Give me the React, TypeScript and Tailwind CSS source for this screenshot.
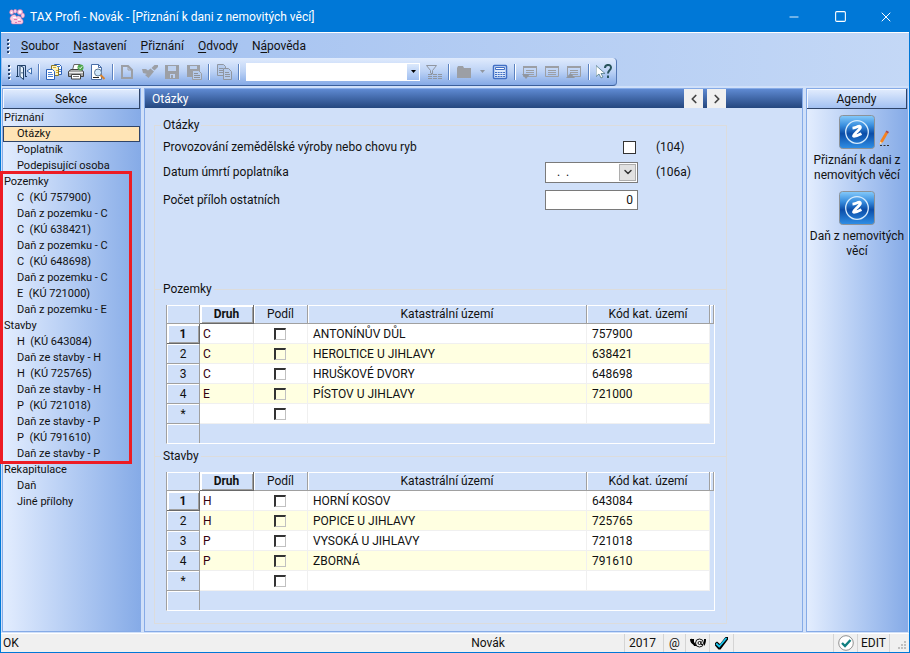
import clsx from "clsx";
import { ChevronDown, ChevronLeft, ChevronRight, Minus, Square, X } from "lucide-react";
import type { JSX, ReactNode } from "react";

type MenuItem = { before: string; hot: string; after: string };

type SectionItem = { title: string; root?: boolean; active?: boolean };

type LandRow = { kind: string; area: string; code: string };

type IconButtonProps = { label: string; children: ReactNode; narrow?: boolean };

const menu: MenuItem[] = [
  { before: "", hot: "S", after: "oubor" },
  { before: "", hot: "N", after: "astavení" },
  { before: "", hot: "P", after: "řiznání" },
  { before: "", hot: "O", after: "dvody" },
  { before: "N", hot: "á", after: "pověda" },
];

const topSections: SectionItem[] = [
  { title: "Přiznání", root: true },
  { title: "Otázky", active: true },
  { title: "Poplatník" },
  { title: "Podepisující osoba" },
];

const propertySections: SectionItem[] = [
  { title: "Pozemky", root: true },
  { title: "C  (KÚ 757900)" },
  { title: "Daň z pozemku - C" },
  { title: "C  (KÚ 638421)" },
  { title: "Daň z pozemku - C" },
  { title: "C  (KÚ 648698)" },
  { title: "Daň z pozemku - C" },
  { title: "E  (KÚ 721000)" },
  { title: "Daň z pozemku - E" },
  { title: "Stavby", root: true },
  { title: "H  (KÚ 643084)" },
  { title: "Daň ze stavby - H" },
  { title: "H  (KÚ 725765)" },
  { title: "Daň ze stavby - H" },
  { title: "P  (KÚ 721018)" },
  { title: "Daň ze stavby - P" },
  { title: "P  (KÚ 791610)" },
  { title: "Daň ze stavby - P" },
];

const bottomSections: SectionItem[] = [
  { title: "Rekapitulace", root: true },
  { title: "Daň" },
  { title: "Jiné přílohy" },
];

const lands: LandRow[] = [
  { kind: "C", area: "ANTONÍNŮV DŮL", code: "757900" },
  { kind: "C", area: "HEROLTICE U JIHLAVY", code: "638421" },
  { kind: "C", area: "HRUŠKOVÉ DVORY", code: "648698" },
  { kind: "E", area: "PÍSTOV U JIHLAVY", code: "721000" },
];

const buildings: LandRow[] = [
  { kind: "H", area: "HORNÍ KOSOV", code: "643084" },
  { kind: "H", area: "POPICE U JIHLAVY", code: "725765" },
  { kind: "P", area: "VYSOKÁ U JIHLAVY", code: "721018" },
  { kind: "P", area: "ZBORNÁ", code: "791610" },
];

/* ICONS */

const PawIcon = () => (
  <svg viewBox="0 0 16 16" className="size-4 shrink-0">
    <g fill="#f9cfe2" stroke="#dd6aa8" strokeWidth="0.5">
      <ellipse cx="2.6" cy="3.2" rx="2" ry="2.4" />
      <ellipse cx="6.2" cy="2.2" rx="1.600" ry="2" />
      <ellipse cx="11" cy="3" rx="2.8" ry="2.6" />
      <ellipse cx="13.800" cy="6.500" rx="1.800" ry="2.400" />
      <path d="M1.500 8c2-3 5-3 6-.5 2-1.500 5 0 5 2.500 2 .5 2.500 5-.5 5H4c-2 0-2-2-1.500-3C1 11 .5 9.500 1.500 8z" />
    </g>
    <path d="M5 10h3v1H5zM9 12h3v1H9zM6 13h2v1H6z" fill="#e27ab0" />
    <path d="M4 8h3v1H4zM10 2h2v2h-2zM9 10h2v1H9zM2 3h1v1H2z" fill="#fff" />
  </svg>
);

const DoorIcon = () => (
  <svg viewBox="0 0 16 16" className="size-4" fill="none" stroke="#1f3f66">
    <path d="M0 12.500h3M1.500 12V1.500h8V12M9 12.500h2" />
    <path d="M4 1.500l3.500 2v12L4 12.500z" fill="#e6f2fb" />
    <path d="M6 8v1.500" />
    <path d="M15.500 4v6L11 7z" fill="#fff" stroke="#3f6fae" />
  </svg>
);

const CopyDocsIcon = () => (
  <svg viewBox="0 0 16 16" className="size-4">
    <path d="M8.500.5h5l2 2v8h-7z" fill="#fff" stroke="#2d62b8" />
    <path d="M5.500 1.500h5l2 2v8h-7z" fill="#fbf3c0" stroke="#8a7622" />
    <path d="M7 3.500h3M10 6.500h2M10 8.500h2" stroke="#d9b030" />
    <path d="M.5 5.500h6l2 2v8h-8z" fill="#fff" stroke="#2d62b8" />
    <path d="M2 8.500h4M2 10.500h5M2 12.500h5M11 2.500h3M13 5.500h2M13 7.500h2" stroke="#4c82d4" />
  </svg>
);

const PrintIcon = () => (
  <svg viewBox="0 0 16 16" className="size-4">
    <path d="M4.500 6L6 .5h6L10.500 6z" fill="#fff" stroke="#666" />
    <path d="M.5 7.500L3 5.500h10l2.500 2v5H.5z" fill="#a9a9a9" stroke="#444" />
    <path d="M1 8.500h14" stroke="#f0f0f0" />
    <path d="M3.500 10.500h9v4.500h-9z" fill="#fff" stroke="#444" />
    <path d="M5 12.500h6" stroke="#777" />
    <circle cx="12.500" cy="3.500" r="3" fill="#4aa548" />
    <path d="M11 3.500l1.200 1.200 2-2.400" fill="none" stroke="#fff" />
  </svg>
);

const PreviewIcon = () => (
  <svg viewBox="0 0 16 16" className="size-4">
    <path d="M1.500.5h7l3 3v12h-10z" fill="#fff" stroke="#4a6fa8" />
    <path d="M8.500.5v3h3" fill="none" stroke="#4a6fa8" />
    <path d="M3 13.500h6" stroke="#222" />
    <circle cx="8" cy="8.500" r="3.500" fill="#cfe6fa" stroke="#5f7c99" />
    <path d="M10.500 11l4 4" stroke="#d9822b" strokeWidth="2" />
  </svg>
);

const BlankDocIcon = () => (
  <svg viewBox="0 0 16 16" className="size-4" fill="none" stroke="#9c9fa5" strokeWidth="2">
    <path d="M2 2h6l4 4v8H2z" />
    <path d="M8 2v4h4" strokeWidth="1" />
  </svg>
);

const BrushIcon = () => (
  <svg viewBox="0 0 16 16" className="size-4" fill="#9c9fa5">
    <path d="M12.500 1H16v2l-3.500 3.500L9.500 4z" />
    <path d="M8.500 4.500l3.500 3-5.500 6.500L3 11l2-1-4-1L0 5h4l2 1.500z" />
  </svg>
);

const SaveIcon = () => (
  <svg viewBox="0 0 16 16" className="size-4">
    <path d="M1 1h14v14H1z" fill="#9c9fa5" />
    <path d="M4 2h8v5H4zM6 10h5v4H6z" fill="#bdd1f0" />
    <path d="M7 11h2v3H7z" fill="#9c9fa5" />
  </svg>
);

const SaveDocIcon = () => (
  <svg viewBox="0 0 16 16" className="size-4">
    <path d="M1 1h13v12H1z" fill="#9c9fa5" />
    <path d="M4 2h7v3H4z" fill="#bdd1f0" />
    <path d="M6.500 6.500h6l3 3v6h-9z" fill="#b5cbed" stroke="#9c9fa5" />
    <path d="M8 9.500h4M8 11.500h6M8 13.500h6" stroke="#8c919a" />
  </svg>
);

const CopyIcon = () => (
  <svg viewBox="0 0 16 16" className="size-4" fill="#b5cbed" stroke="#9096a0">
    <path d="M1.500.5h6l2 2v9h-8z" />
    <path d="M3 4.500h4M3 6.500h4M3 8.500h4" />
    <path d="M7.500 4.500h5l3 3v8h-8z" />
    <path d="M9 8.500h4M9 10.500h5M9 12.500h5" />
  </svg>
);

const FilterIcon = () => (
  <svg viewBox="0 0 16 16" className="size-4" fill="none" stroke="#9096a0">
    <path d="M.5 1.500h10l-4 5V10l-2-1V6.500z" />
    <path d="M2 10.500h14M2 12.500h14M2 14.500h14" strokeDasharray="4 1" />
  </svg>
);

const FolderIcon = () => (
  <svg viewBox="0 0 16 16" className="size-4" fill="#9c9fa5">
    <path d="M1 4l1-2h5l1 2h7v10H1z" />
  </svg>
);

const CalculatorIcon = () => (
  <svg viewBox="0 0 16 16" className="size-4" fill="none" stroke="#416fc4">
    <rect x="1.500" y="1.500" width="13" height="13" rx="1" fill="#dce9fb" strokeWidth="1.500" />
    <path d="M3.500 3.500h9v2h-9z" fill="#fff" />
    <path d="M3 8.500h10M3 10.500h10M3 12.500h10" strokeDasharray="2 0.700" />
  </svg>
);

const NoteIcon = ({ kind }: { kind: "down" | "plain" | "up" }) => (
  <svg viewBox="0 0 16 16" className="size-4" fill="none" stroke="#9c9fa5">
    <path d="M1.500 2.500h13v10h-13z" />
    <path d="M1 3h14" strokeWidth="2" />
    <path d="M4 6.500h8M4 8.500h8M4 10.500h8" />
    {kind === "down" && <path d="M0 10h8l-4 5z" fill="#9096a0" stroke="none" />}
    {kind === "up" && <path d="M0 14h9l-4.500-5z" fill="#9096a0" stroke="none" />}
  </svg>
);

const HelpCursorIcon = () => (
  <svg viewBox="0 0 16 16" className="size-4">
    <path d="M9 4c0-4 6-4 6-.5 0 3-3 2.500-3 6M12 11.500V14" fill="none" stroke="#28535c" strokeWidth="2" />
    <path d="M0 1.500v11l3-2.500L5 14l2-1-2-3.500h4z" fill="#fff" stroke="#4f7a86" strokeWidth="0.800" />
  </svg>
);

const AgendaIcon = () => (
  <svg viewBox="0 0 36 34" className="h-[34px] w-9">
    <defs>
      <linearGradient id="agenda" x1="0" y1="0" x2="0" y2="1">
        <stop offset="0" stopColor="#86cbfb" />
        <stop offset="0.300" stopColor="#3a8fdf" />
        <stop offset="0.550" stopColor="#0b4da8" />
        <stop offset="1" stopColor="#2f8fe6" />
      </linearGradient>
    </defs>
    <rect x="0.500" y="0.500" width="35" height="33" rx="3" fill="url(#agenda)" stroke="#8d9298" />
    <circle cx="18" cy="17" r="11.300" fill="none" stroke="#d6ebfd" strokeWidth="1.300" />
    <path
      d="M13.500 13.200c2.500-.2 4.500-1.700 7.200-2 1.800.8-.2 3-2 4.800-1.500 1.600-3.700 3.400-4.200 5.200 2.500.3 5-1 8-2.500"
      fill="none"
      stroke="#fff"
      strokeWidth="2.800"
      strokeLinejoin="round"
    />
  </svg>
);

const PencilIcon = () => (
  <svg viewBox="0 0 12 17" className="absolute top-[15px] left-[39px] h-[17px] w-3">
    <path d="M1.500 14.500l1-4L7.500 2l2.500 1.300-5 8.700z" fill="#f58220" />
    <path d="M7.500 2l1-1.500L11 2l-1 1.500z" fill="#b04848" />
    <path d="M1.500 14.500l.7-3 2 1.500z" fill="#fbe3b8" />
    <path d="M2 15.500h9" stroke="#333" strokeDasharray="2 1.500" />
  </svg>
);

/* TOOLBAR */

const IconButton = ({ label, children, narrow }: IconButtonProps) => (
  <button
    type="button"
    aria-label={label}
    className={clsx("flex h-5 shrink-0 items-center justify-center", narrow ? "w-[14px]" : "w-[22px]")}
  >
    {children}
  </button>
);

const Separator = () => (
  <span className="flex w-2 shrink-0 justify-center">
    <span className="h-4 w-[2px] border-r border-r-white bg-[#5b82c0]" />
  </span>
);

const Grip = () => (
  <span className="ml-[6px] flex w-[3px] shrink-0 flex-col gap-[2px]">
    {[0, 1, 2, 3].map((dot) => (
      <span key={dot} className="size-[2px] bg-[#27416b] shadow-[1px_1px_0_#fff]" />
    ))}
  </span>
);

const Toolbar = () => (
  <div className="ml-px flex h-7 w-fit items-center rounded-r-sm border-r border-b border-r-[#5377b5] border-b-[#3b5f9b] bg-linear-to-b from-[#e0ebfd] via-[#bcd2f5] to-[#84a9e6] pr-px">
    <Grip />
    <span className="w-[2px]" />
    <IconButton label="Konec"><DoorIcon /></IconButton>
    <Separator />
    <IconButton label="Kopie dokladu"><CopyDocsIcon /></IconButton>
    <IconButton label="Tisk"><PrintIcon /></IconButton>
    <IconButton label="Náhled"><PreviewIcon /></IconButton>
    <Separator />
    <IconButton label="Nový"><BlankDocIcon /></IconButton>
    <IconButton label="Vymazat"><BrushIcon /></IconButton>
    <IconButton label="Uložit"><SaveIcon /></IconButton>
    <IconButton label="Uložit jako"><SaveDocIcon /></IconButton>
    <Separator />
    <IconButton label="Kopírovat"><CopyIcon /></IconButton>
    <Separator />
    <div className="relative ml-[3px] flex">
      <select aria-label="Vyhledat" className="h-[18px] w-[174px] appearance-none bg-white">
        <option></option>
      </select>
      <span className="pointer-events-none absolute top-px right-px flex h-4 w-3 items-center justify-center bg-linear-to-b from-[#dce9fc] to-[#9fbef0]">
        <svg viewBox="0 0 5 3" className="h-[3px] w-[5px]">
          <path d="M0 0h5L2.500 3z" />
        </svg>
      </span>
    </div>
    <span className="w-[3px]" />
    <IconButton label="Filtr"><FilterIcon /></IconButton>
    <Separator />
    <IconButton label="Složka"><FolderIcon /></IconButton>
    <IconButton label="Další složky" narrow>
      <svg viewBox="0 0 5 3" className="h-[3px] w-[5px]">
        <path d="M0 0h5L2.500 3z" fill="#9096a0" />
      </svg>
    </IconButton>
    <IconButton label="Kalkulačka"><CalculatorIcon /></IconButton>
    <Separator />
    <IconButton label="Poznámka dolů"><NoteIcon kind="down" /></IconButton>
    <IconButton label="Poznámka"><NoteIcon kind="plain" /></IconButton>
    <IconButton label="Poznámka nahoru"><NoteIcon kind="up" /></IconButton>
    <Separator />
    <IconButton label="Nápověda"><HelpCursorIcon /></IconButton>
  </div>
);

/* PANELS */

const PanelTitle = ({ children }: { children: ReactNode }) => (
  <h2 className="flex h-5 shrink-0 items-center justify-center border-r border-b border-[#2f4468] bg-linear-to-b from-[#e3edfd] to-[#a3c1f2] shadow-[inset_1px_1px_0_#f4f8ff]">
    {children}
  </h2>
);

const SectionList = ({ items }: { items: SectionItem[] }) => (
  <ul>
    {items.map((item, index) => (
      <li key={index}>
        <a
          href="#"
          className={clsx(
            "block h-4 text-[11px] leading-4 whitespace-pre",
            item.root ? "pl-px" : "pl-[14px]",
            item.active && "bg-[#ffe4b5] outline-1 -outline-offset-1 outline-[#2f4468]"
          )}
        >
          {item.title}
        </a>
      </li>
    ))}
  </ul>
);

const Group = ({ title, children, first }: { title: string; children: ReactNode; first?: boolean }) => (
  <fieldset className={clsx("border border-b-0 border-[#dcdcdc] last:border-b", !first && "-mt-2")}>
    <legend className="ml-[6px] h-4 px-[2px] leading-4">{title}</legend>
    {children}
  </fieldset>
);

const headCell = "border-r border-b border-[#a0a0a0] p-0 font-normal shadow-[inset_1px_1px_0_#fff]";
const activeCell = "border-r border-b border-[#696969] p-0 font-bold shadow-[inset_2px_2px_0_#fff,inset_-1px_-1px_0_#a0a0a0]";
const dataCell = "border-r border-b border-[#f0f0f0] py-0";

type GridProps = { name: string; rows: LandRow[] };

type GridType = (props: GridProps) => JSX.Element;

const CellBox = ({ label }: { label: string }) => (
  <input
    type="checkbox"
    aria-label={label}
    className="ml-5 block size-3 appearance-none border-t-2 border-l-2 border-r border-b border-t-[#333] border-r-[#c0c0c0] border-b-[#c0c0c0] border-l-[#333]"
  />
);

const Grid: GridType = ({ name, rows }) => {
  //

  return (
    <div className="mx-[11px] mt-2 mb-3 border-r border-b border-l border-r-white border-b-white border-l-[#a0a0a0]">
      <table aria-label={name} className="w-full table-fixed border-separate border-spacing-0">
        <colgroup>
          <col className="w-[33px]" />
          <col className="w-[54px]" />
          <col className="w-[54px]" />
          <col />
          <col className="w-[123px]" />
          <col className="w-[4px]" />
        </colgroup>
        <thead>
          <tr className="h-[19px]">
            <th className={headCell}></th>
            <th className={activeCell}>Druh</th>
            <th className={headCell}>Podíl</th>
            <th className={headCell}>Katastrální území</th>
            <th className={headCell}>Kód kat. území</th>
            <th className={headCell}></th>
          </tr>
        </thead>
        <tbody>
          {rows.map((row, index) => (
            <tr key={row.code} className={clsx("h-5", index % 2 === 1 ? "bg-[#ffffe1]" : "bg-white")}>
              <th className={clsx("bg-[#d0e0f9]", index === 0 ? activeCell : headCell)}>{index + 1}</th>
              <td className={clsx(dataCell, "pr-0 pl-[3px] text-[#33000f]")}>{row.kind}</td>
              <td className={clsx(dataCell, "px-0")}>
                <CellBox label={"Podíl " + (index + 1)} />
              </td>
              <td className={clsx(dataCell, "pr-0 pl-[5px]")}>{row.area}</td>
              <td className={clsx(dataCell, "pr-0 pl-[5px]")}>{row.code}</td>
              <td className="bg-[#d0e0f9] p-0"></td>
            </tr>
          ))}
          <tr className="h-5 bg-white">
            <th className={clsx("bg-[#d0e0f9]", headCell)}>*</th>
            <td className={dataCell}></td>
            <td className={clsx(dataCell, "px-0")}>
              <CellBox label="Podíl nový" />
            </td>
            <td className={dataCell}></td>
            <td className={dataCell}></td>
            <td className="bg-[#d0e0f9] p-0"></td>
          </tr>
          <tr className="h-[19px]">
            <th className="border-r border-[#a0a0a0] p-0 shadow-[inset_1px_1px_0_#fff]"></th>
            <td colSpan={5} className="p-0"></td>
          </tr>
        </tbody>
      </table>
    </div>
  );
};

const Questions = () => (
  <div className="mx-2 mt-[2px] mb-[74px] grid grid-cols-[1fr_93px_80px] items-center">
    <label htmlFor="farming">Provozování zemědělské výroby nebo chovu ryb</label>
    <span className="flex h-6 items-center justify-end">
      <input id="farming" type="checkbox" className="mr-[2px] size-[13px] appearance-none border border-[#333] bg-white" />
    </span>
    <span className="pl-[18px]">(104)</span>

    <label htmlFor="death">Datum úmrtí poplatníka</label>
    <span className="relative flex h-[26px] items-center">
      <input
        id="death"
        type="text"
        defaultValue=".  ."
        className="h-[21px] w-full border border-[#7a7a7a] bg-white pl-[11px] whitespace-pre"
      />
      <button
        type="button"
        aria-label="Vybrat datum"
        className="absolute right-[2px] flex h-[17px] w-[17px] items-center justify-center border border-[#adadad] bg-[#e1e1e1]"
      >
        <ChevronDown className="size-3 text-[#333]" strokeWidth={3} />
      </button>
    </span>
    <span className="pl-[18px]">(106a)</span>

    <label htmlFor="attachments">Počet příloh ostatních</label>
    <span className="flex h-[30px] items-center">
      <input
        id="attachments"
        type="text"
        defaultValue="0"
        className="h-5 w-full border border-[#7a7a7a] bg-white pr-1 text-right"
      />
    </span>
  </div>
);

const Agendas = () => (
  <nav className="flex flex-col items-center bg-linear-to-r from-[#e3edfe] to-[#86abe7] pt-[6px] text-center leading-[15px]">
    <a href="#" className="flex flex-col items-center">
      <span className="relative">
        <AgendaIcon />
        <PencilIcon />
      </span>
      <span className="mt-1 block">
        Přiznání k dani z<br />nemovitých věcí
      </span>
    </a>
    <a href="#" className="flex flex-col items-center pt-2">
      <AgendaIcon />
      <span className="mt-1 block">
        Daň z nemovitých
        <br />
        věcí
      </span>
    </a>
  </nav>
);

const statusCell = "flex h-full items-center border-l border-[#d4d4d4]";

const StatusBar = () => (
  <footer className="flex h-[19px] shrink-0 items-center border-t border-white bg-[#f0f0f0] leading-4">
    <span className="flex-1 pl-[2px]">OK</span>
    <span className="w-[272px] text-center">Novák</span>
    <span className={clsx(statusCell, "w-[39px] pl-1")}>2017</span>
    <span className={clsx(statusCell, "w-[22px] justify-center")}>@</span>
    <span className={clsx(statusCell, "w-6 justify-center")}>
      <svg viewBox="0 0 16 10" className="h-[10px] w-4">
        <path d="M0 1h4v6C1.500 6 0 4 0 1zM16 1h-2v7c1.500-1.500 2-4 2-7z" />
        <circle cx="9.500" cy="5" r="4" fill="none" stroke="#111" />
        <circle cx="9.500" cy="5" r="1.500" fill="none" stroke="#111" />
        <path d="M11 3v3.500h2" fill="none" stroke="#111" />
        <path d="M1 0l6 8H4z" />
      </svg>
    </span>
    <span className={clsx(statusCell, "w-6 justify-center")}>
      <svg viewBox="0 0 13 13" className="size-[13px]">
        <path d="M0 6l2-1.500L5 7l5.500-7H13v2.500L5.500 12.500H3.500L0 8.500z" fill="#000" />
        <path d="M1.200 6.500L4.200 9.500l7.300-8.500" fill="none" stroke="#19c8f0" strokeWidth="1.800" />
      </svg>
    </span>
    <span className={clsx(statusCell, "w-[100px]")}></span>
    <span className={clsx(statusCell, "w-6 justify-center")}>
      <svg viewBox="0 0 16 16" className="size-4">
        <circle cx="8" cy="8" r="7.300" fill="#fff" stroke="#777" strokeWidth="0.800" />
        <path d="M4 8l3 3 5.500-6" fill="none" stroke="#0f7f80" strokeWidth="2.400" />
      </svg>
    </span>
    <span className={clsx(statusCell, "w-8 justify-center")}>EDIT</span>
    <span className={clsx(statusCell, "w-5 items-end justify-end pr-[2px] pb-[2px]")}>
      <svg viewBox="0 0 9 9" className="size-[9px]" fill="#bfbfbf">
        <path d="M6 0h2v2H6zM3 3h2v2H3zM6 3h2v2H6zM0 6h2v2H0zM3 6h2v2H3zM6 6h2v2H6z" />
      </svg>
    </span>
  </footer>
);

const panel = "flex min-h-0 flex-col border border-[#86abe7]";

export default function App() {
  return (
    <div className="flex h-screen flex-col border border-[#0078d7] bg-[#0078d7] font-['Roboto','Noto_Sans',sans-serif] text-[12px] leading-4 text-[#111]">
      <header className="flex h-[31px] shrink-0 items-center pl-2 text-white">
        <PawIcon />
        <h1 className="flex-1 pl-[5px]">TAX Profi - Novák - [Přiznání k dani z nemovitých věcí]</h1>
        <button type="button" aria-label="Minimalizovat" className="flex h-full w-[46px] items-center justify-center">
          <Minus className="size-[14px]" strokeWidth={1.5} />
        </button>
        <button type="button" aria-label="Maximalizovat" className="flex h-full w-[46px] items-center justify-center">
          <Square className="size-[13px]" strokeWidth={2} />
        </button>
        <button type="button" aria-label="Zavřít" className="flex h-full w-[46px] items-center justify-center">
          <X className="size-4" strokeWidth={1.5} />
        </button>
      </header>

      <div className="shrink-0 border-t border-white bg-linear-to-r from-[#9fbeef] to-[#c4d8f6]">
        <nav className="flex h-[25px] items-center">
          <Grip />
          <span className="w-1" />
          {menu.map((item) => (
            <button key={item.hot} type="button" className="px-[7px]">
              {item.before}
              <span className="underline underline-offset-2">{item.hot}</span>
              {item.after}
            </button>
          ))}
        </nav>
        <Toolbar />
      </div>

      <div className="flex min-h-0 flex-1 bg-[#d0e0f9] px-px pt-[2px] pb-px">
        <aside className={clsx(panel, "w-[139px] shrink-0")}>
          <PanelTitle>Sekce</PanelTitle>
          <nav className="flex-1 bg-linear-to-r from-[#e3edfe] to-[#86abe7] pt-px">
            <SectionList items={topSections} />
            <div className="relative">
              <SectionList items={propertySections} />
              <div className="pointer-events-none absolute -top-[3px] right-2 -bottom-[2px] -left-[3px] border-3 border-[#ed1c24]" />
            </div>
            <SectionList items={bottomSections} />
          </nav>
        </aside>

        <main className={clsx(panel, "ml-[3px] flex-1")}>
          <div className="flex h-[19px] shrink-0 items-center bg-linear-to-b from-[#5f8ad2] to-[#24477f] pl-[7px] text-white">
            <h2 className="flex-1">Otázky</h2>
            <div className="mr-[76px] flex gap-1 text-[#444]">
              <button type="button" aria-label="Předchozí" className="flex h-[19px] w-[19px] items-center justify-center bg-[#f0f0f0]">
                <ChevronLeft className="size-[14px]" strokeWidth={3} />
              </button>
              <button type="button" aria-label="Další" className="flex h-[19px] w-[19px] items-center justify-center bg-[#f0f0f0]">
                <ChevronRight className="size-[14px]" strokeWidth={3} />
              </button>
            </div>
          </div>
          <form className="flex-1 pt-[9px] pr-[75px] pl-[9px]">
            <Group title="Otázky" first>
              <Questions />
            </Group>
            <Group title="Pozemky">
              <Grid name="Pozemky" rows={lands} />
            </Group>
            <Group title="Stavby">
              <Grid name="Stavby" rows={buildings} />
            </Group>
          </form>
        </main>

        <aside className={clsx(panel, "ml-[3px] w-[102px] shrink-0")}>
          <PanelTitle>Agendy</PanelTitle>
          <div className="grid flex-1">
            <Agendas />
          </div>
        </aside>
      </div>

      <StatusBar />
    </div>
  );
}
